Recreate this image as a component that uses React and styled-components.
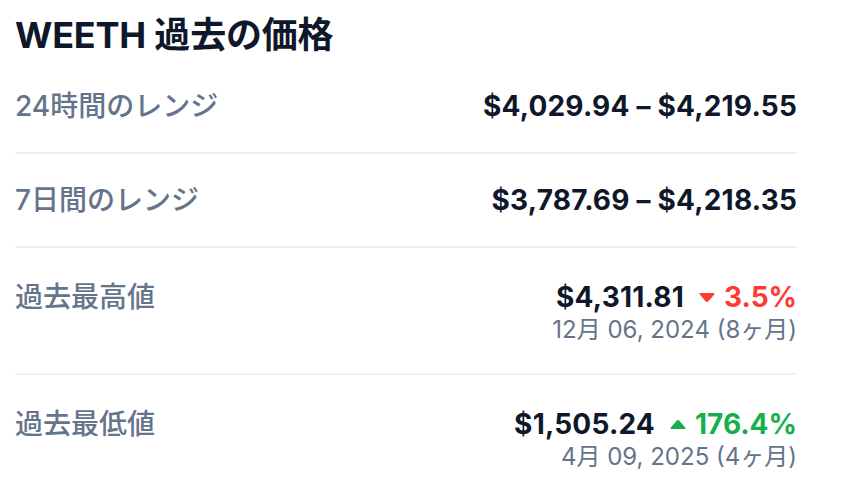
import React from 'react';
import styled, { createGlobalStyle } from 'styled-components';

const GlobalStyle = createGlobalStyle`
  body {
    margin: 0;
    background: #ffffff;
    font-family: Inter, "Noto Sans CJK JP", sans-serif;
  }
`;

const rows = [
  { label: '24時間のレンジ', value: '$4,029.94 – $4,219.55' },
  { label: '7日間のレンジ', value: '$3,787.69 – $4,218.35' },
  { label: '過去最高値', value: '$4,311.81', change: '3.5%', up: false, date: '12月 06, 2024 (8ヶ月)' },
  { label: '過去最低値', value: '$1,505.24', change: '176.4%', up: true, date: '4月 09, 2025 (4ヶ月)' },
];

const Caret = ({ up }) => (
  <CaretIcon viewBox="0 0 16 9" $up={up}>
    <path d="M0.8 1.6 L6.6 8.2 Q8 9.6 9.4 8.2 L15.2 1.6 Q16.2 0 14.4 0 L1.6 0 Q-0.2 0 0.8 1.6 Z" fill="currentColor" />
  </CaretIcon>
);

const App = () => {
  return (
    <>
      <GlobalStyle />
      <Wrapper>
        <Title>WEETH 過去の価格</Title>
        <List>
          {rows.map((r) => (
            <Row key={r.label} $tall={!!r.date}>
              <Label>{r.label}</Label>
              <ValueBlock>
                <ValueLine>
                  <Value>{r.value}</Value>
                  {r.change && (
                    <Change $up={r.up}>
                      <Caret up={r.up} />
                      {r.change}
                    </Change>
                  )}
                </ValueLine>
                {r.date && <DateText>{r.date}</DateText>}
              </ValueBlock>
            </Row>
          ))}
        </List>
      </Wrapper>
    </>
  );
};

const Wrapper = styled.section`
  width: 782px;
  padding: 11px 0 0 15px;
`;

const Title = styled.h2`
  margin: 0;
  font-size: 36px;
  line-height: 49px;
  font-weight: 700;
  color: #0f172a;
  letter-spacing: -0.2px;
`;

const List = styled.div`
  display: flex;
  flex-direction: column;
`;

const Row = styled.div`
  display: flex;
  justify-content: space-between;
  align-items: flex-start;
  padding: ${({ $tall }) => ($tall ? '29px 0 30px' : '26px 0')};
  border-bottom: 2px solid #eef0f3;

  &:last-child {
    border-bottom: none;
  }
`;

const Label = styled.div`
  font-size: 28px;
  line-height: 40px;
  font-weight: 500;
  color: #64748b;
`;

const ValueBlock = styled.div`
  display: flex;
  flex-direction: column;
  align-items: flex-end;
`;

const ValueLine = styled.div`
  display: flex;
  align-items: center;
  gap: 15px;
`;

const Value = styled.div`
  font-size: 28px;
  line-height: 40px;
  font-weight: 700;
  color: #0f172a;
  letter-spacing: 0.2px;
`;

const Change = styled.div`
  display: flex;
  align-items: center;
  gap: 9px;
  font-size: 28px;
  line-height: 40px;
  font-weight: 700;
  color: ${({ $up }) => ($up ? '#16b04a' : '#ff3a33')};
`;

const CaretIcon = styled.svg`
  width: 16px;
  height: 9px;
  flex-shrink: 0;
  transform: ${({ $up }) => ($up ? 'rotate(180deg)' : 'none')};
`;

const DateText = styled.div`
  font-size: 24px;
  line-height: 26px;
  color: #64748b;
`;

export default App;
